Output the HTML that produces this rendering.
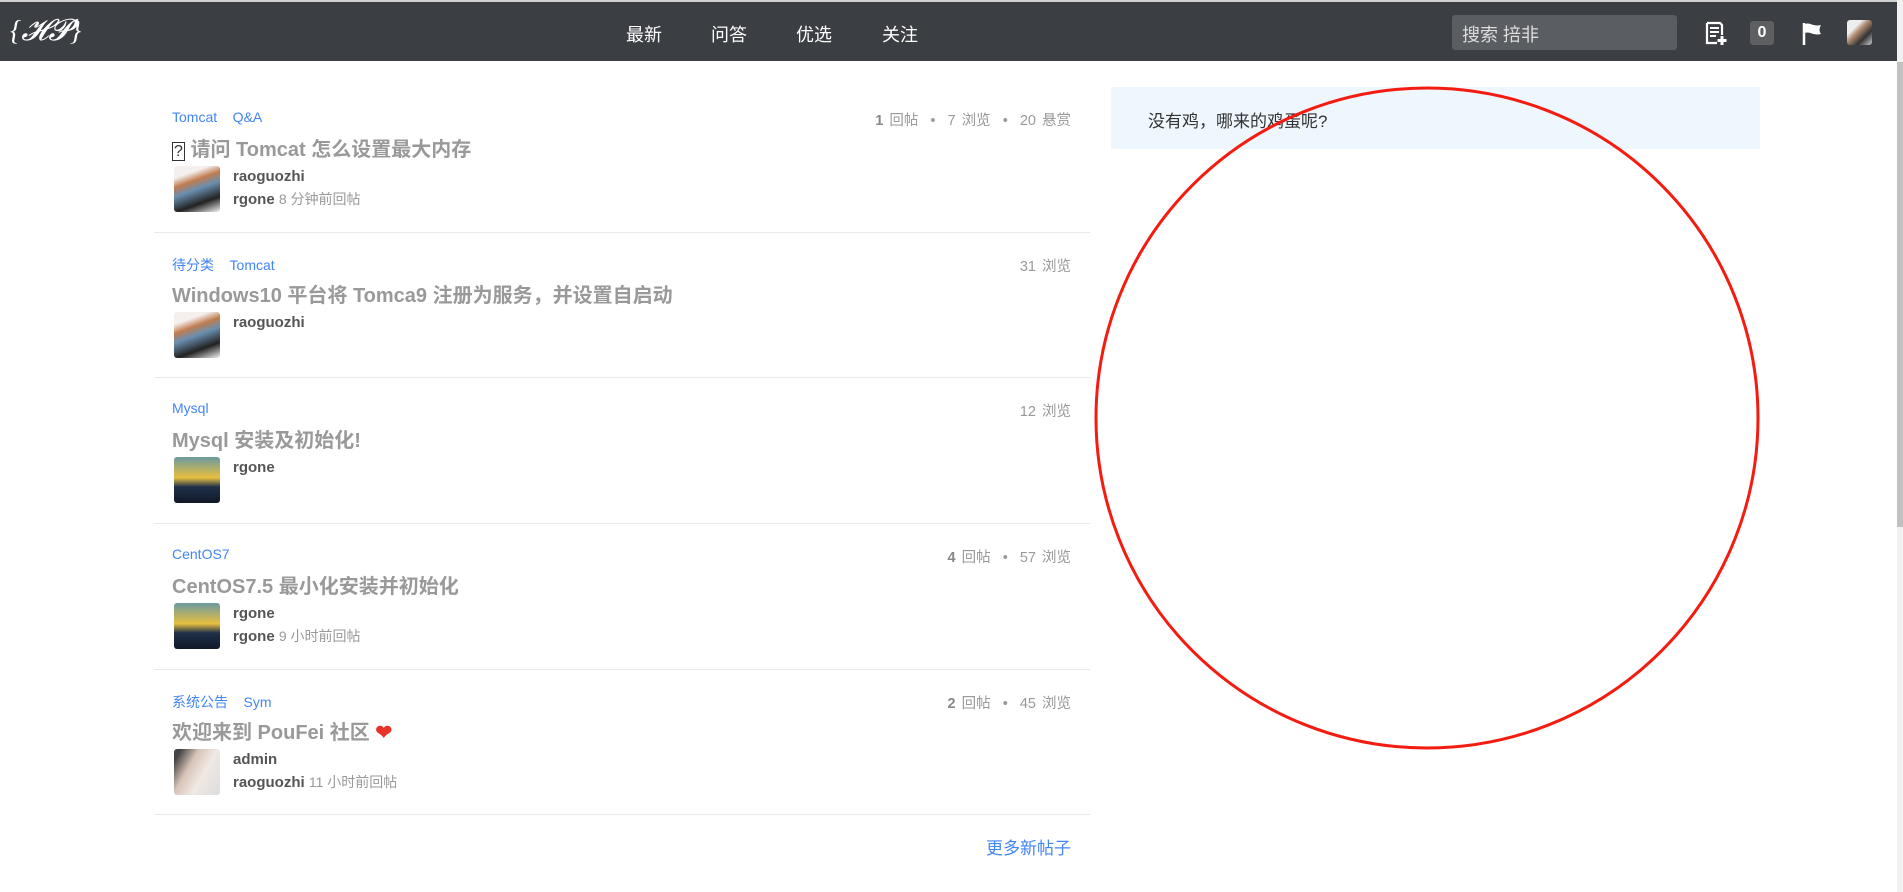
<!DOCTYPE html>
<html><head><meta charset="utf-8"><style>
*{margin:0;padding:0;box-sizing:border-box}
body{width:1903px;height:892px;overflow:hidden;background:#fff;font-family:"Liberation Sans","Noto Sans CJK SC",sans-serif;position:relative}
.hdr{position:absolute;left:0;top:0;width:1897px;height:61px;background:#3b3e43;border-top:2px solid #d0d0d0}
.a{position:absolute;white-space:nowrap}
.nav{color:#fff;font-size:18px;top:19px}
.tag{color:#4285f4;font-size:14px}
.meta{color:#999;font-size:14.5px;right:832px;word-spacing:2px}
.meta b{color:#888}
.title{color:#999;font-size:20px;font-weight:bold}
.name{color:#555;font-size:15px;font-weight:bold}
.name span{font-weight:normal;color:#999;font-size:14px}
.av{position:absolute;width:46px;height:46px;border-radius:3px}
.sep{position:absolute;left:154px;width:936px;height:1px;background:#eaeaea}
</style></head><body>
<div class="hdr">
 <div class="a" style="left:10px;top:12px;color:#fff;font-family:'Liberation Serif',serif;font-size:28px;font-style:italic">{<span style="font-size:30px">𝓗𝓟</span>}</div>
 <div class="a nav" style="left:626px">最新</div>
 <div class="a nav" style="left:711px">问答</div>
 <div class="a nav" style="left:796px">优选</div>
 <div class="a nav" style="left:882px">关注</div>
 <div class="a" style="left:1452px;top:13px;width:225px;height:35px;background:#5a5d62;border-radius:3px;color:#ddd;font-size:18px;padding:6px 10px">搜索 掊非</div>
 <svg class="a" style="left:1704px;top:19px" width="24" height="26" viewBox="0 0 24 26"><path d="M3 2h13l2 2v10M3 2v20h10" fill="none" stroke="#fff" stroke-width="2.2"/><path d="M6 7h9M6 11h9M6 15h6" stroke="#fff" stroke-width="2"/><path d="M18 15v9M13.5 19.5h9" stroke="#fff" stroke-width="3"/></svg>
 <div class="a" style="left:1750px;top:19px;width:24px;height:24px;background:#5e5f61;border-radius:3px;color:#fff;font-size:16px;font-weight:bold;text-align:center;line-height:24px">0</div>
 <svg class="a" style="left:1800px;top:19px" width="24" height="26" viewBox="0 0 24 26"><path d="M4 2v22" stroke="#fff" stroke-width="2.5"/><path d="M5 3c5-2 8 3 16 1-2 4-2 6 0 9-8 2-11-3-16-1z" fill="#fff"/></svg>
 <div class="a" style="left:1847px;top:18px;width:25px;height:25px;border-radius:3px;background:linear-gradient(135deg,#eee 30%,#b08a70 45%,#333 70%,#ccc)"></div>
</div>
<div class="a" style="left:1897px;top:0;width:6px;height:892px;background:#f1f1f1"></div>
<div class="a" style="left:1897px;top:62px;width:6px;height:465px;background:#c1c1c1"></div>

<!-- item1 -->
<div class="a tag" style="left:172px;top:109px">Tomcat&nbsp;&nbsp;&nbsp;&nbsp;Q&amp;A</div>
<div class="a meta" style="top:109px"><b>1</b> 回帖 &nbsp;•&nbsp; 7 浏览 &nbsp;•&nbsp; 20 悬赏</div>
<div class="a title" style="left:172px;top:133px"><span style="font-weight:normal;color:#333;font-size:16px;border:1.5px solid #333;padding:0 1px">?</span> 请问 Tomcat 怎么设置最大内存</div>
<div class="av" style="left:174px;top:166px;background:linear-gradient(160deg,#f5f0ee 20%,#c07c50 35%,#6a8fb0 50%,#222 75%,#f3f3f3)"></div>
<div class="a name" style="left:233px;top:168px">raoguozhi</div>
<div class="a name" style="left:233px;top:189px">rgone <span>8 分钟前回帖</span></div>
<div class="sep" style="top:232px"></div>
<!-- item2 -->
<div class="a tag" style="left:172px;top:255px">待分类&nbsp;&nbsp;&nbsp;&nbsp;Tomcat</div>
<div class="a meta" style="top:255px">31 浏览</div>
<div class="a title" style="left:172px;top:279px">Windows10 平台将 Tomca9 注册为服务，并设置自启动</div>
<div class="av" style="left:174px;top:312px;background:linear-gradient(160deg,#f5f0ee 20%,#c07c50 35%,#6a8fb0 50%,#222 75%,#f3f3f3)"></div>
<div class="a name" style="left:233px;top:314px">raoguozhi</div>
<div class="sep" style="top:377px"></div>
<!-- item3 -->
<div class="a tag" style="left:172px;top:400px">Mysql</div>
<div class="a meta" style="top:400px">12 浏览</div>
<div class="a title" style="left:172px;top:424px">Mysql 安装及初始化!</div>
<div class="av" style="left:174px;top:457px;background:linear-gradient(180deg,#6a9aa0,#e8c040 45%,#203048 65%,#101828)"></div>
<div class="a name" style="left:233px;top:459px">rgone</div>
<div class="sep" style="top:523px"></div>
<!-- item4 -->
<div class="a tag" style="left:172px;top:546px">CentOS7</div>
<div class="a meta" style="top:546px"><b>4</b> 回帖 &nbsp;•&nbsp; 57 浏览</div>
<div class="a title" style="left:172px;top:570px">CentOS7.5 最小化安装并初始化</div>
<div class="av" style="left:174px;top:603px;background:linear-gradient(180deg,#6a9aa0,#e8c040 45%,#203048 65%,#101828)"></div>
<div class="a name" style="left:233px;top:605px">rgone</div>
<div class="a name" style="left:233px;top:626px">rgone <span>9 小时前回帖</span></div>
<div class="sep" style="top:669px"></div>
<!-- item5 -->
<div class="a tag" style="left:172px;top:692px">系统公告&nbsp;&nbsp;&nbsp;&nbsp;Sym</div>
<div class="a meta" style="top:692px"><b>2</b> 回帖 &nbsp;•&nbsp; 45 浏览</div>
<div class="a title" style="left:172px;top:716px">欢迎来到 PouFei 社区 <span style="color:#e8322a">❤</span></div>
<div class="av" style="left:174px;top:749px;background:linear-gradient(120deg,#444 10%,#d8c4b8 35%,#f0e8e4 60%,#ddd)"></div>
<div class="a name" style="left:233px;top:751px">admin</div>
<div class="a name" style="left:233px;top:772px">raoguozhi <span>11 小时前回帖</span></div>
<div class="sep" style="top:814px"></div>
<div class="a" style="right:832px;top:834px;color:#4285f4;font-size:17px">更多新帖子</div>

<div class="a" style="left:1111px;top:87px;width:649px;height:62px;background:#eef6fe"></div>
<div class="a" style="left:1148px;top:107px;color:#333;font-size:17px">没有鸡，哪来的鸡蛋呢?</div>
<svg class="a" style="left:0;top:0" width="1903" height="892"><ellipse cx="1427" cy="418" rx="331" ry="330" fill="none" stroke="#f41c10" stroke-width="3"/></svg>
</body></html>
